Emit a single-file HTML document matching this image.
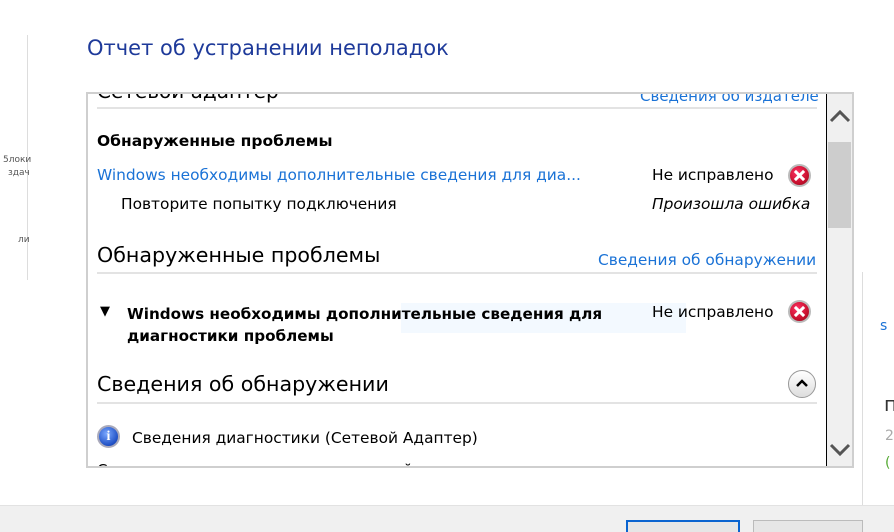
<!DOCTYPE html>
<html><head><meta charset="utf-8"><style>
*{margin:0;padding:0;box-sizing:border-box}
html,body{width:894px;height:532px;overflow:hidden}
body{background:#fff;position:relative;font-family:"DejaVu Sans","Liberation Sans",sans-serif;color:#000}
.a{position:absolute;white-space:nowrap}
.lnk{color:#1a72d6}
.hr{position:absolute;left:97px;width:720px;height:2px;background:#e3e3e3}
.x{position:absolute;width:23px;height:23px;border-radius:50%;background:radial-gradient(circle at 40% 35%,#f36 0%,#c8102e 60%,#8a0a1c 100%);border:2px solid #bbb}
.x:before,.x:after{content:"";position:absolute;left:8px;top:3px;width:3px;height:13px;background:#fff;transform:rotate(45deg)}
.x:after{transform:rotate(-45deg)}
</style></head><body>
<div class="a" style="left:0;top:35px;width:28px;height:245px;background:#fff;border-right:1px solid #ddd"></div>
<div class="a" style="left:3px;top:155px;font-size:9px;color:#555">5локи</div>
<div class="a" style="left:8px;top:168px;font-size:9px;color:#555">здач</div>
<div class="a" style="left:18px;top:235px;font-size:9px;color:#555">ли</div>
<div class="a" style="left:0;top:505px;width:894px;height:27px;background:#f0f0f0;border-top:1px solid #e2e2e2"></div>
<div class="a" style="left:626px;top:520px;width:114px;height:14px;border:2px solid #0a64d0;background:#e6e6e6"></div>
<div class="a" style="left:753px;top:520px;width:110px;height:14px;border:1px solid #bbb;background:#e6e6e6"></div>
<div class="a" style="left:862px;top:272px;width:32px;height:233px;background:#fff;border-left:1px solid #ddd"></div>
<div class="a" style="left:880px;top:318px;font-size:14px;color:#1a72d6">s</div>
<div class="a" style="left:884px;top:392px;font-size:20px;color:#333">п</div>
<div class="a" style="left:885px;top:428px;font-size:14px;color:#aaa">2</div>
<div class="a" style="left:885px;top:455px;font-size:14px;color:#5a3">(</div>

<div class="a" style="left:87px;top:36px;font-size:21px;color:#1e3a9a">Отчет об устранении неполадок</div>

<div class="a" style="left:86px;top:92px;width:768px;height:376px;border:2px solid #cfcfcf;background:#fff"></div>
<div class="a" style="left:88px;top:94px;width:738px;height:372px;overflow:hidden">
 <div class="a" style="left:9px;top:-15px;font-size:20px">Сетевой адаптер</div>
 <div class="a lnk" style="left:552px;top:-7px;font-size:15px">Сведения об издателе</div>
 <div class="hr" style="left:9px;top:13px"></div>
 <div class="a" style="left:9px;top:38px;font-size:15.5px;font-weight:bold">Обнаруженные проблемы</div>
 <div class="a lnk" style="left:9px;top:72px;font-size:15.4px">Windows необходимы дополнительные сведения для диа...</div>
 <div class="a" style="left:564px;top:72px;font-size:15.4px">Не исправлено</div>
 <div class="x" style="left:700px;top:70px"></div>
 <div class="a" style="left:33px;top:101px;font-size:15.4px">Повторите попытку подключения</div>
 <div class="a" style="left:564px;top:101px;font-size:15.4px;font-style:italic">Произошла ошибка</div>
 <div class="a" style="left:9px;top:149px;font-size:20.6px">Обнаруженные проблемы</div>
 <div class="a lnk" style="left:510px;top:157px;font-size:15.4px">Сведения об обнаружении</div>
 <div class="hr" style="left:9px;top:178px"></div>
 <div class="a" style="left:313px;top:209px;width:285px;height:30px;background:#f3f9ff"></div>
 <div class="a" style="left:12px;top:210px;font-size:13px">▼</div>
 <div class="a" style="left:39px;top:209px;font-size:15.2px;font-weight:bold;line-height:22px">Windows необходимы дополнительные сведения для<br>диагностики проблемы</div>
 <div class="a" style="left:564px;top:209px;font-size:15.4px">Не исправлено</div>
 <div class="x" style="left:700px;top:206px"></div>
 <div class="a" style="left:9px;top:278px;font-size:20.6px">Сведения об обнаружении</div>
 <div class="a" style="left:700px;top:276px;width:28px;height:28px;border-radius:50%;background:linear-gradient(#fff,#ddd);border:1px solid #999"></div>
 <svg class="a" style="left:706px;top:283px" width="16" height="12"><path d="M3 9 L8 4 L13 9" stroke="#000" stroke-width="2.5" fill="none"/></svg>
 <div class="hr" style="left:9px;top:308px"></div>
 <div class="a" style="left:9px;top:331px;width:23px;height:23px;border-radius:50%;background:radial-gradient(circle at 40% 35%,#7aa8ff,#1f4fc4 70%,#1a3a8a);border:2px solid #aab;color:#fff;font:bold 14px 'Liberation Serif',serif;text-align:center;line-height:19px">i</div>
 <div class="a" style="left:44px;top:335px;font-size:15.4px">Сведения диагностики (Сетевой Адаптер)</div>
 <div class="a" style="left:9px;top:367px;font-size:15px">С</div>
 <div class="a" style="left:315px;top:367px;font-size:15px">й</div>
</div>
<div class="a" style="left:826px;top:94px;width:1px;height:372px;background:#000"></div>
<div class="a" style="left:827px;top:94px;width:25px;height:372px;background:#f0f0f0"></div>
<div class="a" style="left:828px;top:142px;width:23px;height:86px;background:#cdcdcd"></div>
<svg class="a" style="left:828px;top:106px" width="24" height="20"><path d="M3 15 L12 6 L21 15" stroke="#555" stroke-width="3" fill="none"/></svg>
<svg class="a" style="left:828px;top:440px" width="24" height="20"><path d="M3 5 L12 14 L21 5" stroke="#555" stroke-width="3" fill="none"/></svg>
</body></html>
